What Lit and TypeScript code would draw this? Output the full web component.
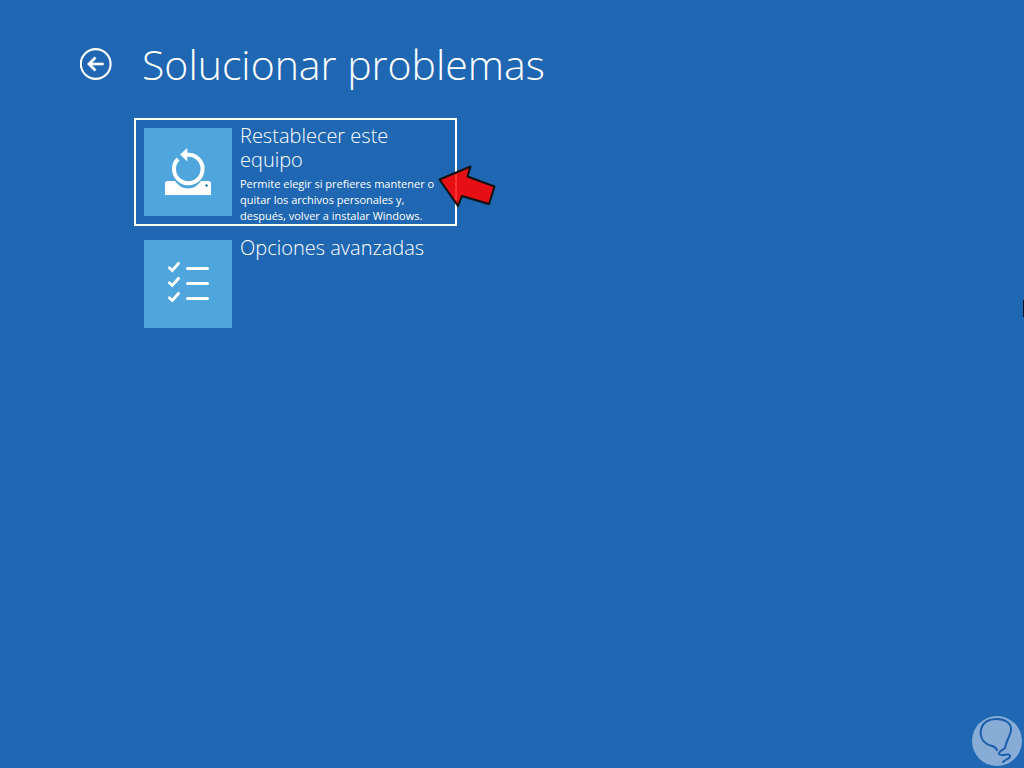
import { LitElement, html, css, svg } from "lit";
import { customElement } from "lit/decorators.js";

const resetIcon = svg`
  <svg viewBox="0 0 88 88" aria-hidden="true">
    <path d="M21 55.500Q21 53 23.500 53H31Q36 60.500 44 60.500Q52 60.500 57 53H64.500Q67 53 67 55.500V67H21Z" fill="#fff"/>
    <path d="M34 31A14.300 14.300 0 1 0 43 26.700" fill="none" stroke="#fff" stroke-width="4"/>
    <path d="M36 26.500L43.300 20V33.500Z" fill="#fff"/>
    <path d="M61 57.500h3M62.500 56v3" stroke="#2f86c6" stroke-width="1.200"/>
  </svg>`;

const listIcon = svg`
  <svg viewBox="0 0 88 88" aria-hidden="true" fill="none" stroke="#fff">
    ${[28, 43, 58].map(
      (y) => svg`
        <path d="M24.500 ${y - 1}L28.300 ${y + 2.5}L35.300 ${y - 5.5}" stroke-width="2.800"/>
        <path d="M43.500 ${y + 0.5}H63.500" stroke-width="3" stroke-linecap="round"/>`
    )}
  </svg>`;

@customElement("option-card")
class OptionCard extends LitElement {
  static properties = {
    heading: {},
    description: {},
    icon: { attribute: false },
    selected: { type: Boolean },
  };
  declare heading: string;
  declare description: string;
  declare icon: unknown;
  declare selected: boolean;

  static styles = css`
    :host { display: block; }
    .card {
      display: flex;
      align-items: flex-start;
      gap: 8px;
      width: 100%;
      min-height: 108px;
      box-sizing: border-box;
      padding: 4px 8px 0;
      border: 2px solid transparent;
      background: none;
      color: #fff;
      font: inherit;
      text-align: left;
      outline: none;
    }
    .selected { border-color: #fff; }
    .card:focus-visible { border-color: #fff; }
    .tile {
      flex: none;
      width: 88px;
      height: 88px;
      margin-top: 4px;
      background: #4ea6dc;
    }
    .tile svg { display: block; width: 100%; height: 100%; }
    .text { flex: 1; display: flex; flex-direction: column; gap: 4px; }
    .heading { font-size: 20px; line-height: 24px; font-weight: 300; }
    .description { font-size: 11px; line-height: 16px; font-weight: 400; }
  `;

  render() {
    return html`
      <button class="card ${this.selected ? "selected" : ""}" type="button">
        <span class="tile">${this.icon}</span>
        <span class="text">
          <span class="heading">${this.heading}</span>
          ${this.description ? html`<span class="description">${this.description}</span>` : null}
        </span>
      </button>`;
  }
}

@customElement("app-root")
class AppRoot extends LitElement {
  static styles = css`
    :host {
      display: block;
      position: relative;
      min-height: 100vh;
      box-sizing: border-box;
      padding: 32px 80px;
      overflow: hidden;
      background: #1f67b2;
      color: #fff;
      font-family: "Segoe UI", "Open Sans", "Noto Sans", sans-serif;
    }
    header { display: flex; align-items: center; gap: 30px; height: 64px; }
    .back { width: 32px; height: 32px; padding: 0; border: 0; background: none; color: #fff; }
    .back svg { display: block; }
    h1 { margin: 0; font-size: 41px; line-height: 64px; font-weight: 300; white-space: nowrap; }
    main {
      position: relative;
      display: flex;
      flex-direction: column;
      gap: 4px;
      max-width: 323px;
      margin: 22px 0 0 54px;
    }
    .pointer { position: absolute; left: 300px; top: 42px; }
    .caret { position: absolute; right: 0; top: 300px; width: 1px; height: 17px; background: #06122a; }
    .mark { position: absolute; right: 1px; bottom: 1px; }
  `;

  render() {
    return html`
      <header>
        <button class="back" type="button" aria-label="Atrás">
          <svg width="32" height="32" viewBox="0 0 32 32" fill="none" stroke="#fff" aria-hidden="true">
            <circle cx="15.700" cy="16" r="14.900" stroke-width="2.100"/>
            <path d="M9 16H23.700" stroke-width="2.600"/>
            <path d="M15.500 9.500L9 16L15.500 22.500" stroke-width="2.800"/>
          </svg>
        </button>
        <h1>Solucionar problemas</h1>
      </header>
      <main>
        <option-card
          selected
          heading="Restablecer este equipo"
          description="Permite elegir si prefieres mantener o quitar los archivos personales y, después, volver a instalar Windows."
          .icon=${resetIcon}
        ></option-card>
        <option-card heading="Opciones avanzadas" .icon=${listIcon}></option-card>
        <svg class="pointer" width="68" height="52" viewBox="0 0 68 52" aria-hidden="true">
          <path d="M5 20L37 6L34 16L61 26L55 44L28 36L24 46Z" transform="translate(0 2)" fill="#0b3c78" opacity=".25"/>
          <path d="M5.500 19.500L36.500 6.500L33.500 16.500L60.500 26.500L55 44L28 36L24 46Z" fill="#e60f16" stroke="#111" stroke-width="2" stroke-linejoin="round"/>
          <path d="M22 14.500V40" stroke="#ff3030" stroke-width="2"/>
        </svg>
      </main>
      <span class="caret"></span>
      <svg class="mark" width="52" height="52" viewBox="0 0 52 52" fill="none" aria-hidden="true">
        <circle cx="26" cy="26" r="25" fill="#87add7"/>
        <path d="M26 35C23 29 20 32 16 29C11 26 9 20 10 14C12 7 18 4 26 4C34 4 40 8 40 14C40 21 35 25 34 33C30 36 27 37 28 39C30 42 39 37 39 41C39 44 35 44 32 47" stroke="#1c5caa" stroke-width="2" stroke-linecap="round"/>
      </svg>`;
  }
}
